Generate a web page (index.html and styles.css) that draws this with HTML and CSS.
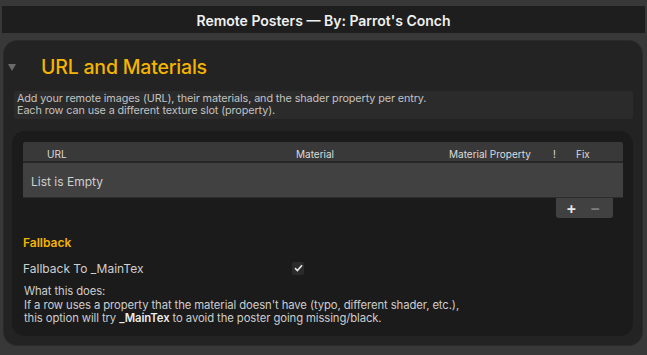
FILE: index.html
```html
<!DOCTYPE html>
<html>
<head>
<meta charset="utf-8">
<link rel="stylesheet" href="styles.css">
</head>
<body>
<div class="titlebar">Remote Posters — By: Parrot's Conch</div>
<div class="outer">
  <div class="section-head">
    <span class="tri"></span>
    <span class="section-title">URL and Materials</span>
  </div>
  <div class="help">Add your remote images (URL), their materials, and the shader property per entry.<br>Each row can use a different texture slot (property).</div>
  <div class="inner">
    <div class="list">
      <div class="list-head">
        <span class="c-url">URL</span>
        <span class="c-mat">Material</span>
        <span class="c-prop">Material Property</span>
        <span class="c-ex">!</span>
        <span class="c-fix">Fix</span>
      </div>
      <div class="list-body">List is Empty</div>
      <div class="list-foot">
        <div class="addrem"><span class="plus">+</span><span class="minus">−</span></div>
      </div>
    </div>
    <div class="fb-title">Fallback</div>
    <div class="fb-row">
      <span class="fb-label">Fallback To _MainTex</span>
      <span class="check"><svg width="9" height="8" viewBox="0 0 9 8"><path d="M1 4.2 L3.4 6.5 L8 1.2" fill="none" stroke="#e8e8e8" stroke-width="1.6"/></svg></span>
    </div>
    <div class="fb-help">What this does:<br>If a row uses a property that the material doesn't have (typo, different shader, etc.),<br>this option will try <b>_MainTex</b> to avoid the poster going missing/black.</div>
  </div>
</div>
</body>
</html>
```
FILE: styles.css
```css
* { box-sizing: border-box; }
html, body { margin: 0; padding: 0; }
body {
  background: #383838;
  width: 647px;
  height: 355px;
  overflow: hidden;
  font-family: Inter, "Noto Sans", sans-serif;
  color: #d2d2d2;
  padding-top: 6px;
}
.titlebar {
  margin: 0 2px;
  height: 27px;
  background: #1e1e1e;
  color: #f0f0f0;
  font-weight: 600;
  font-size: 14px;
  display: flex;
  align-items: center;
  justify-content: center;
  padding-top: 1px;
}
.outer {
  margin: 7px 4px 0 3px;
  height: 306px;
  background: #232323;
  border: 1px solid #2a2a2a;
  border-radius: 14px;
  padding: 0 9px 0 7px;
}
.section-head {
  height: 50px;
  display: flex;
  align-items: center;
  padding-top: 1px;
}
.tri {
  width: 0; height: 0;
  border-left: 4px solid transparent;
  border-right: 4px solid transparent;
  border-top: 7px solid #6a6a6a;
  margin-left: -3px;
  margin-top: 2px;
}
.section-title {
  margin-left: 25px;
  color: #f4b400;
  font-size: 19.5px;
  font-weight: 500;
  letter-spacing: -0.2px;
}
.help {
  margin-left: 3px;
  background: #2b2b2b;
  font-size: 10.8px;
  line-height: 12px;
  color: #c2c2c2;
  padding: 2px 3px;
  height: 28px;
  border-radius: 2px;
  letter-spacing: -0.1px;
}
.inner {
  margin-top: 12px;
  margin-left: 1px;
  height: 205px;
  background: #1b1b1b;
  border-radius: 13px;
  padding: 11px 10px 0 11px;
}
.list-head {
  background: #393939;
  border-radius: 2px 2px 0 0;
  font-size: 10px;
  color: #dcdcdc;
  position: relative;
  border-bottom: 2px solid #262626;
  height: 21px;
}
.list-head span { position: absolute; top: 6px; }
.c-url { left: 24px; }
.c-mat { left: 273px; }
.c-prop { left: 426px; }
.c-ex { left: 530px; }
.c-fix { left: 553px; }
.list-body {
  height: 35px;
  background: #414141;
  display: flex;
  align-items: center;
  padding-left: 8px;
  padding-top: 3px;
  font-size: 12px;
  color: #cfcfcf;
  border-bottom: 1px solid #2c2c2c;
}
.list-foot {
  display: flex;
  justify-content: flex-end;
  padding-right: 10px;
}
.addrem {
  width: 57px;
  height: 20px;
  background: #414141;
  border-radius: 0 0 3px 3px;
  display: flex;
  align-items: center;
  gap: 13px;
  padding-left: 10px;
  font-size: 16px;
  font-weight: 600;
  line-height: 1;
}
.plus { color: #e6e6e6; }
.minus { color: #7e7e7e; }
.fb-title {
  margin-top: 17px;
  color: #f4b400;
  font-weight: 600;
  font-size: 12px;
}
.fb-row {
  margin-top: 11px;
  display: flex;
  align-items: center;
  height: 14px;
}
.fb-label {
  font-size: 12px;
  color: #cfcfcf;
  width: 269px;
}
.check {
  width: 12px;
  height: 13px;
  background: #2b2b2b;
  border-radius: 2px;
  display: flex;
  align-items: center;
  justify-content: center;
}
.fb-help {
  margin-top: 10px;
  font-size: 11.3px;
  line-height: 13.5px;
  color: #cdcdcd;
  padding-left: 1px;
  letter-spacing: -0.1px;
}
.fb-help b { color: #ececec; font-weight: 600; }
```
